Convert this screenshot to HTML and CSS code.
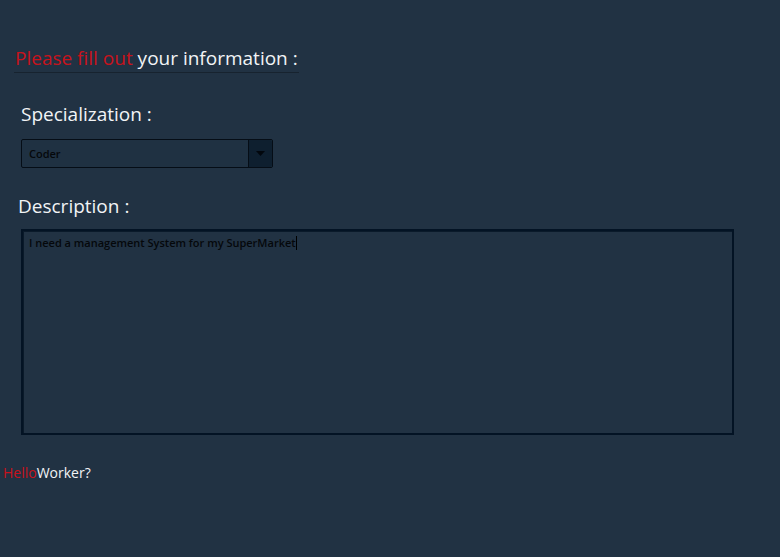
FILE: index.html
```html
<!DOCTYPE html>
<html>
<head>
<meta charset="utf-8">
<link rel="stylesheet" href="styles.css">
</head>
<body>
<div class="page">
  <h1 class="title"><span class="red">Please fill out</span> your information :</h1>
  <label class="label spec">Specialization :</label>
  <div class="select">
    <span class="select-text">Coder</span>
    <span class="select-btn"><svg width="9" height="5" viewBox="0 0 9 5"><path d="M0 0H9L4.5 5Z" fill="#02070d"/></svg></span>
  </div>
  <label class="label desc">Description :</label>
  <div class="textarea"><span>I need a management System for my SuperMarket</span><span class="caret"></span></div>
  <p class="hello"><span class="red">Hello</span>Worker?</p>
</div>
</body>
</html>
```
FILE: styles.css
```css
html, body { margin: 0; padding: 0; }
body {
  background: #213243;
  width: 780px;
  height: 557px;
  overflow: hidden;
  font-family: "Open Sans", "Noto Sans", sans-serif;
  color: #f2f4f6;
}
.page {
  display: flex;
  flex-direction: column;
  align-items: flex-start;
  padding-top: 45px;
}
.red { color: #c8121c; }
.title {
  margin: 0 0 0 14px;
  font-weight: 400;
  font-size: 19px;
  line-height: 26px;
  padding: 0 1px 1px 1px;
  border-bottom: 1px solid #17232f;
}
.label {
  font-size: 19px;
  line-height: 26px;
}
.spec { margin: 28px 0 0 21px; }
.select {
  margin: 12px 0 0 21px;
  width: 250px;
  height: 27px;
  border: 1px solid #050d16;
  border-radius: 2px;
  background: #1f3142;
  display: flex;
  align-items: center;
  box-sizing: content-box;
}
.select-text {
  flex: 1;
  padding-left: 7px;
  font-size: 11px;
  color: #05080b;
  font-weight: 600;
}
.select-btn {
  width: 23px;
  height: 27px;
  border-left: 1px solid #050d16;
  background: #0e1f2f;
  display: flex;
  align-items: center;
  justify-content: center;
  border-radius: 0 2px 2px 0;
}
.desc { margin: 25px 0 0 18px; }
.textarea {
  margin: 10px 0 0 21px;
  border: 2px solid #031324;
  box-shadow: inset 1px 1px 0 #0a1a2a;
  background: #213243;
  box-sizing: content-box;
  padding: 5px 6px 0 6px;
  font-size: 11px;
  line-height: 14px;
  color: #05080b;
  font-weight: 600;
  display: flex;
  align-items: flex-start;
  width: 697px;
  height: 197px;
}
.caret {
  display: inline-block;
  width: 1px;
  height: 14px;
  background: #000;
}
.hello {
  margin: 29px 0 0 3px;
  font-size: 14px;
  line-height: 18px;
}
```
